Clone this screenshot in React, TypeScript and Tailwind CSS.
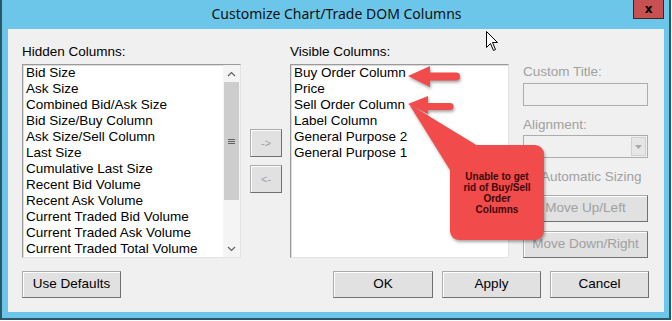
import { ReactNode } from 'react'

const hiddenCols = [
  'Bid Size',
  'Ask Size',
  'Combined Bid/Ask Size',
  'Bid Size/Buy Column',
  'Ask Size/Sell Column',
  'Last Size',
  'Cumulative Last Size',
  'Recent Bid Volume',
  'Recent Ask Volume',
  'Current Traded Bid Volume',
  'Current Traded Ask Volume',
  'Current Traded Total Volume',
]

const visibleCols = [
  'Buy Order Column',
  'Price',
  'Sell Order Column',
  'Label Column',
  'General Purpose 2',
  'General Purpose 1',
]

function Btn({
  children,
  className = '',
  disabled,
}: {
  children: ReactNode
  className?: string
  disabled?: boolean
}) {
  return (
    <div
      className={`flex items-center justify-center bg-[#e1e1e1] border border-[#acacac] border-b-[#707070] border-r-[#707070] shadow-[inset_1px_1px_0_#fdfdfd] ${
        disabled ? 'text-[#a0a0a0]' : 'text-black'
      } ${className}`}
    >
      {children}
    </div>
  )
}

function Chevron({ up }: { up?: boolean }) {
  return (
    <svg width="9" height="6" viewBox="0 0 9 6">
      <polyline
        points={up ? '1,5 4.5,1.5 8,5' : '1,1 4.5,4.5 8,1'}
        fill="none"
        stroke="#606060"
        strokeWidth="1.2"
      />
    </svg>
  )
}

function ListBox({ items, scroll }: { items: string[]; scroll?: boolean }) {
  return (
    <div className="flex h-[194px] bg-white border border-[#9a9a9a] border-b-[#e3e3e3] border-r-[#e3e3e3] shadow-[inset_1px_1px_0_#dcdcdc]">
      <div className="flex-1 pl-[3px] leading-[16px] text-black">
        {items.map((it) => (
          <div key={it} className="h-[16px] whitespace-nowrap">
            {it}
          </div>
        ))}
      </div>
      {scroll && (
        <div className="w-[17px] flex flex-col bg-[#f4f4f4]">
          <div className="h-[17px] flex items-center justify-center">
            <Chevron up />
          </div>
          <div className="h-[118px] bg-[#cdcdcd] mx-[1px] flex flex-col items-center justify-center gap-[1px]">
            <div className="w-[7px] h-[1px] bg-[#606060]" />
            <div className="w-[7px] h-[1px] bg-[#606060]" />
            <div className="w-[7px] h-[1px] bg-[#606060]" />
          </div>
          <div className="flex-1" />
          <div className="h-[17px] flex items-center justify-center">
            <Chevron />
          </div>
        </div>
      )}
    </div>
  )
}

export default function App() {
  return (
    <div
      className="relative w-[672px] h-[321px] bg-white overflow-hidden"
      style={{ fontFamily: '"Liberation Sans", Arial, sans-serif' }}
    >
      <div className="flex flex-col w-[671px] h-[320px] bg-[#6bc6e9] border-l-2 border-r-2 border-b-2 border-[#2a5669] pl-[6px] pr-[5px]">
        {/* title bar */}
        <div className="h-[29px] flex items-start">
          <div className="w-[32px]" />
          <div
            className="flex-1 text-center text-[14px] leading-[28px] text-[#111]"
            style={{ fontFamily: '"Noto Sans", "Open Sans", sans-serif' }}
          >
            Customize Chart/Trade DOM Columns
          </div>
          <div className="w-[31px] h-[19px] bg-[#c75050] border border-t-0 border-[#3e2424] flex items-center justify-center">
            <span
              className="text-[12px] font-bold leading-none text-black"
              style={{ fontFamily: '"DejaVu Sans", sans-serif' }}
            >
              x
            </span>
          </div>
        </div>

        {/* client area */}
        <div className="h-[283px] bg-[#f0f0f0] pl-[14px] pt-[15px] text-[13.5px]">
          <div className="flex h-[214px]">
            <div className="w-[219px] flex flex-col">
              <div className="h-[20px] leading-[15px] text-black">Hidden Columns:</div>
              <ListBox items={hiddenCols} scroll />
            </div>

            <div className="ml-[9px] w-[32px] pt-[85px] flex flex-col gap-[8px]">
              <Btn disabled className="h-[28px] text-[11px]">
                -&gt;
              </Btn>
              <Btn disabled className="h-[28px] text-[11px]">
                &lt;-
              </Btn>
            </div>

            <div className="ml-[8px] w-[219px] flex flex-col">
              <div className="h-[20px] leading-[15px] text-black">Visible Columns:</div>
              <ListBox items={visibleCols} />
            </div>

            <div className="ml-[14px] w-[125px] flex flex-col pt-[20px] text-[#a0a0a0]">
              <div className="h-[19px] leading-[15px]">Custom Title:</div>
              <div className="h-[23px] border border-[#adadad] bg-[#f0f0f0]" />
              <div className="h-[29px] pt-[11px] leading-[15px]">Alignment:</div>
              <div className="h-[23px] border border-[#adadad] bg-[#f0f0f0] flex justify-end items-center pr-[1px]">
                <div className="w-[15px] h-[19px] bg-[#e6e6e6] border border-[#d0d0d0] flex items-center justify-center">
                  <svg width="7" height="4" viewBox="0 0 7 4">
                    <polygon points="0,0 7,0 3.5,4" fill="#a8a8a8" />
                  </svg>
                </div>
              </div>
              <div className="h-[37px] pt-[11px] flex items-start gap-[5px] whitespace-nowrap">
                <div className="mt-[1px] w-[13px] h-[13px] shrink-0 border border-[#bcbcbc] bg-[#f0f0f0]" />
                <span className="leading-[15px]">Automatic Sizing</span>
              </div>
              <Btn disabled className="h-[27px]">
                Move Up/Left
              </Btn>
              <Btn disabled className="h-[27px] mt-[9px] whitespace-nowrap">
                Move Down/Right
              </Btn>
            </div>
          </div>

          <div className="mt-[13px] flex h-[27px]">
            <Btn className="w-[99px]">Use Defaults</Btn>
            <div className="ml-auto mr-[15px] flex gap-[9px]">
              <Btn className="w-[100px]">OK</Btn>
              <Btn className="w-[99px]">Apply</Btn>
              <Btn className="w-[99px]">Cancel</Btn>
            </div>
          </div>
        </div>
      </div>

      {/* annotation arrows and callout */}
      <svg
        className="absolute left-0 top-0 pointer-events-none"
        width="672"
        height="321"
        viewBox="0 0 672 321"
      >
        <g style={{ filter: 'drop-shadow(1px 2px 1.5px rgba(0,0,0,0.35))' }} fill="#f24b4b">
          <polygon points="408,76 430,66 430,87" />
          <line x1="426" y1="76.5" x2="456" y2="76.5" stroke="#f24b4b" strokeWidth="8" strokeLinecap="round" />
          <polygon points="408,104 428,96 428,114" />
          <line x1="424" y1="106.5" x2="450" y2="106.5" stroke="#f24b4b" strokeWidth="7" strokeLinecap="round" />
          <polygon points="409,104 478,146 450,170" />
          <rect x="450" y="145" width="94" height="95" rx="9" />
        </g>
      </svg>
      <div className="absolute left-[450px] top-[145px] w-[94px] pt-[26px] text-center text-[10px] font-bold leading-[11px] text-[#3a0a0a] whitespace-nowrap">
        Unable to get
        <br />
        rid of Buy/Sell
        <br />
        Order
        <br />
        Columns
      </div>

      {/* mouse cursor */}
      <svg className="absolute left-[486px] top-[31px]" width="13" height="21" viewBox="0 0 13 21">
        <path
          d="M0.5,0.5 L0.5,16.5 L4.5,12.5 L7.5,19.5 L9.5,18.5 L6.5,11.5 L11.5,11.5 Z"
          fill="white"
          stroke="black"
          strokeWidth="1"
        />
      </svg>
    </div>
  )
}
